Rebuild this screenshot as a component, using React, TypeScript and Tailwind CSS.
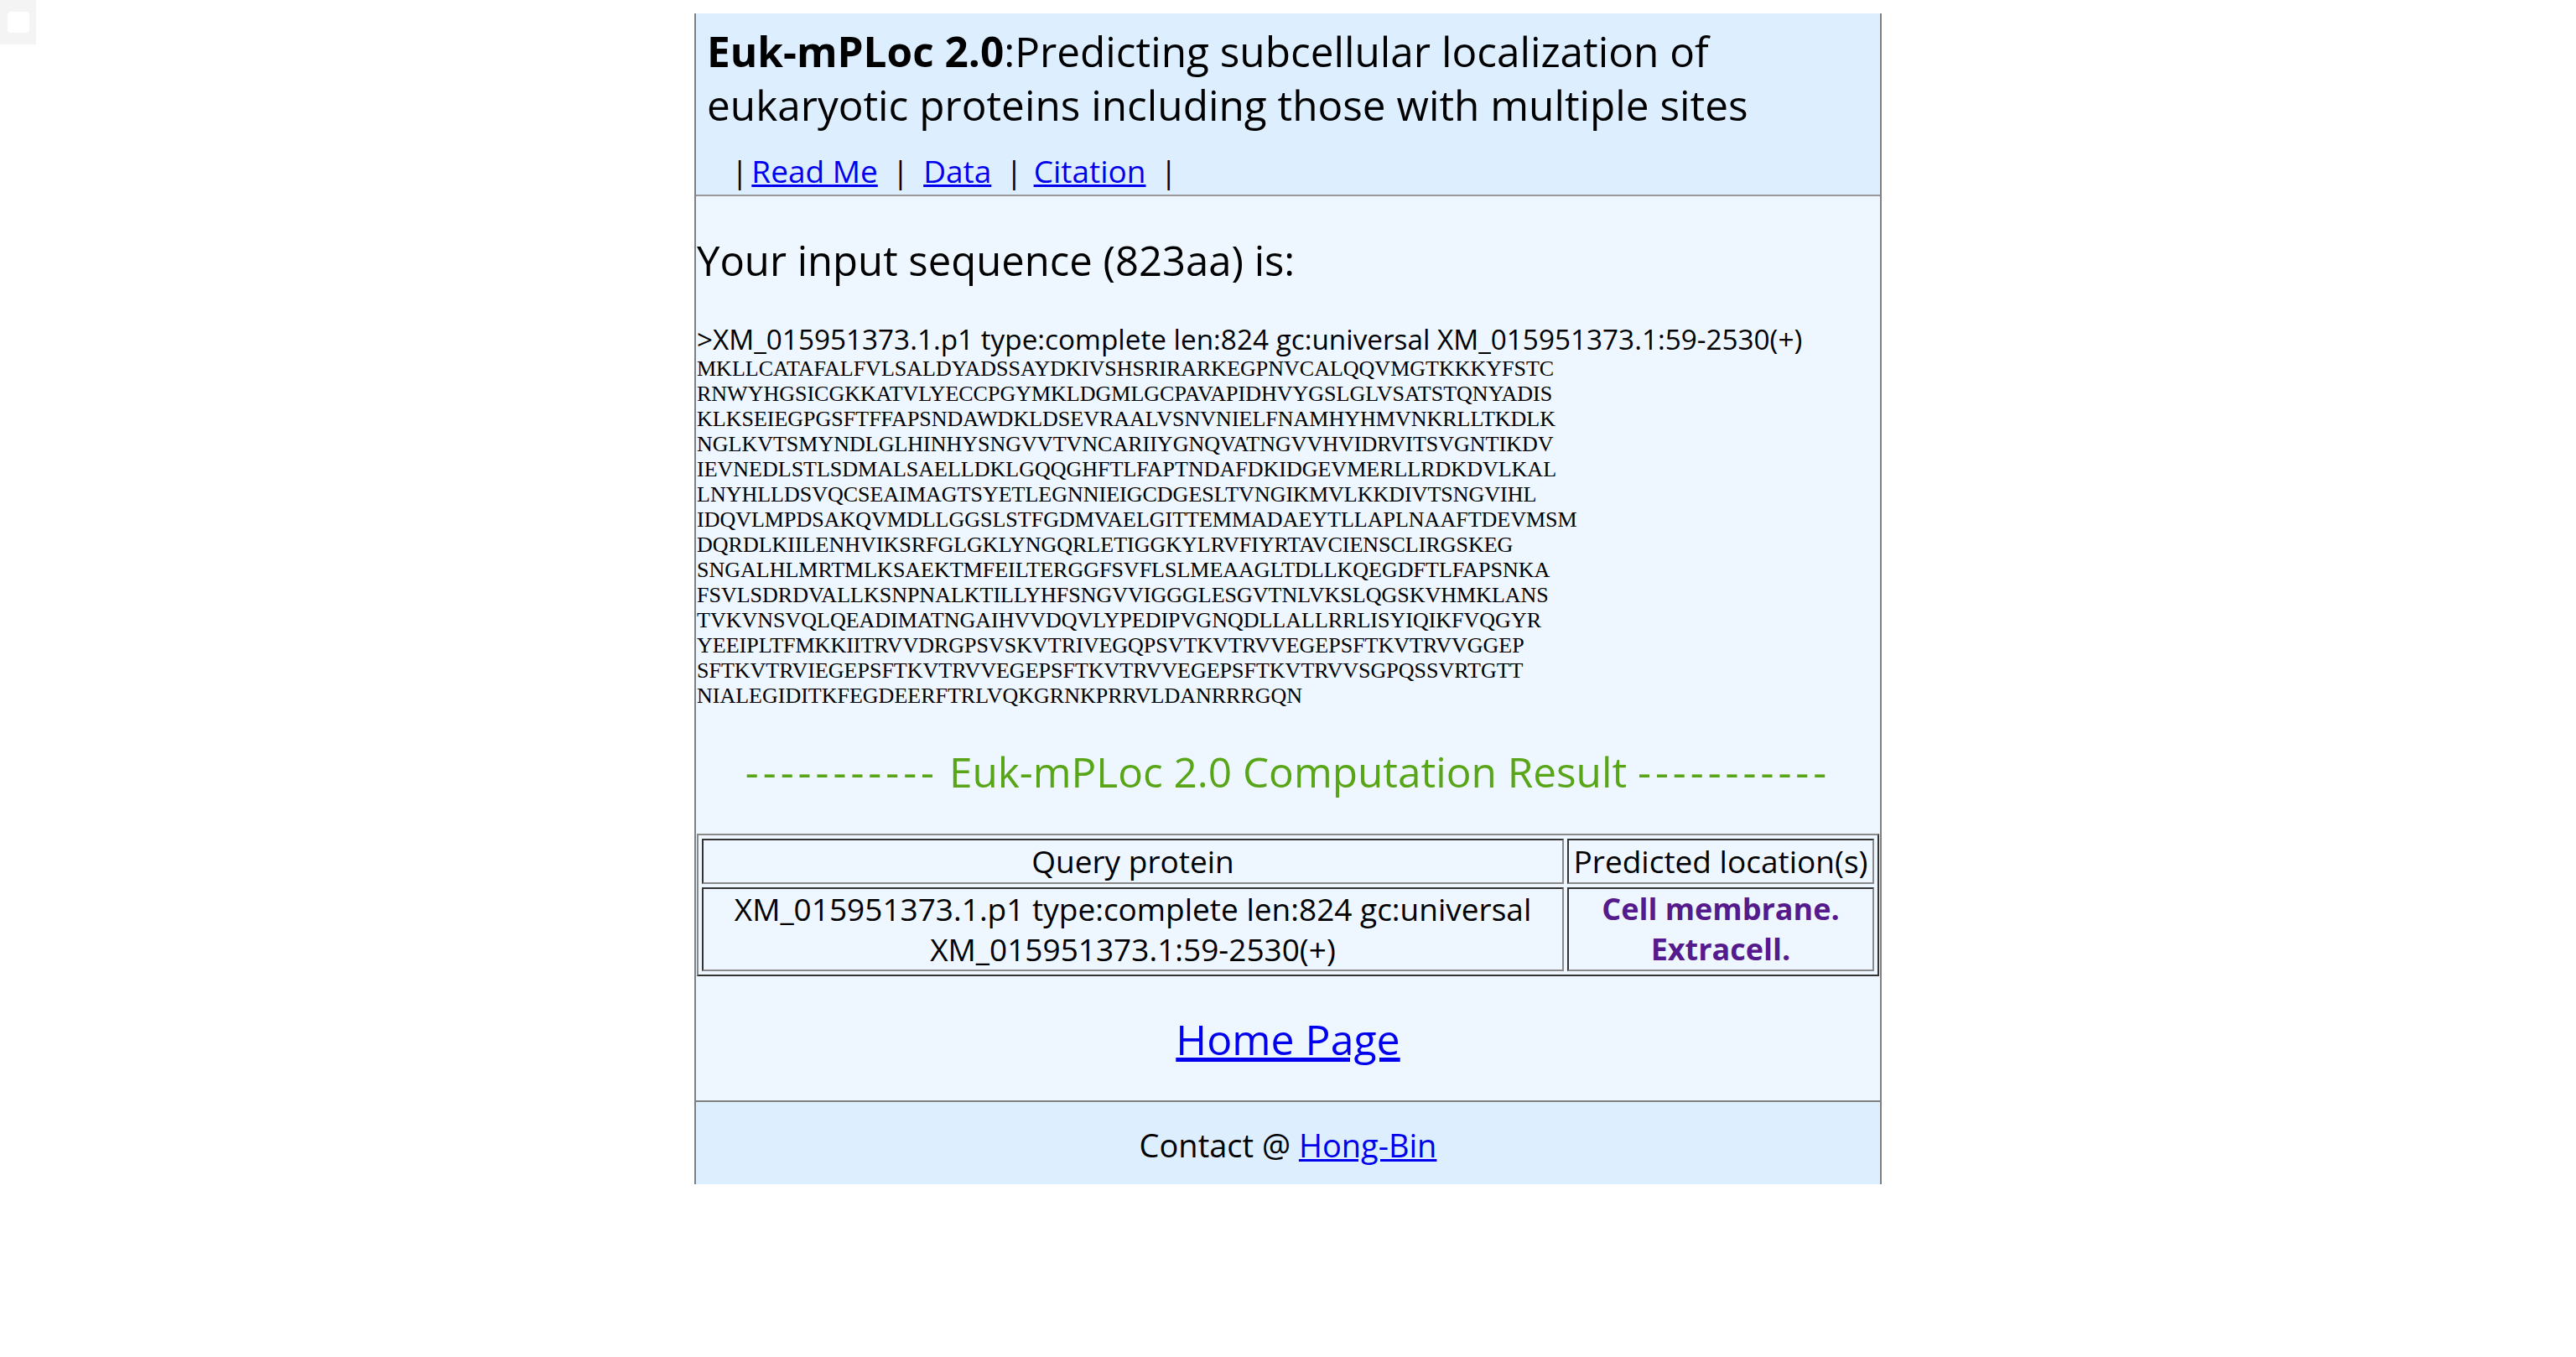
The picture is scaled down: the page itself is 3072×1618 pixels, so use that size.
import React from "react";

const SEQ = [
  "MKLLCATAFALFVLSALDYADSSAYDKIVSHSRIRARKEGPNVCALQQVMGTKKKYFSTC",
  "RNWYHGSICGKKATVLYECCPGYMKLDGMLGCPAVAPIDHVYGSLGLVSATSTQNYADIS",
  "KLKSEIEGPGSFTFFAPSNDAWDKLDSEVRAALVSNVNIELFNAMHYHMVNKRLLTKDLK",
  "NGLKVTSMYNDLGLHINHYSNGVVTVNCARIIYGNQVATNGVVHVIDRVITSVGNTIKDV",
  "IEVNEDLSTLSDMALSAELLDKLGQQGHFTLFAPTNDAFDKIDGEVMERLLRDKDVLKAL",
  "LNYHLLDSVQCSEAIMAGTSYETLEGNNIEIGCDGESLTVNGIKMVLKKDIVTSNGVIHL",
  "IDQVLMPDSAKQVMDLLGGSLSTFGDMVAELGITTEMMADAEYTLLAPLNAAFTDEVMSM",
  "DQRDLKIILENHVIKSRFGLGKLYNGQRLETIGGKYLRVFIYRTAVCIENSCLIRGSKEG",
  "SNGALHLMRTMLKSAEKTMFEILTERGGFSVFLSLMEAAGLTDLLKQEGDFTLFAPSNKA",
  "FSVLSDRDVALLKSNPNALKTILLYHFSNGVVIGGGLESGVTNLVKSLQGSKVHMKLANS",
  "TVKVNSVQLQEADIMATNGAIHVVDQVLYPEDIPVGNQDLLALLRRLISYIQIKFVQGYR",
  "YEEIPLTFMKKIITRVVDRGPSVSKVTRIVEGQPSVTKVTRVVEGEPSFTKVTRVVGGEP",
  "SFTKVTRVIEGEPSFTKVTRVVEGEPSFTKVTRVVEGEPSFTKVTRVVSGPQSSVRTGTT",
  "NIALEGIDITKFEGDEERFTRLVQKGRNKPRRVLDANRRRGQN",
];

const SANS = "font-['Segoe_UI','Open_Sans',sans-serif]";

export default function App() {
  return (
    <div className={`relative min-h-[1618px] bg-white text-black ${SANS}`}>
      <div className="absolute left-0 top-0 flex h-[53px] w-[43px] items-center justify-center bg-[#f4f4f4]">
        <div className="h-[25px] w-[26px] rounded-[4px] bg-white" />
      </div>
      <div className="pt-4">
        <div className="mx-auto w-[1416px] border-x-2 border-[#808080]">
          {/* Header */}
          <div className="border-b-2 border-[#999999] bg-[#ddeeff] pl-[13px] pt-[13px] pb-[7px]">
            <div className="text-[49.5px] leading-[64px]">
              <span className="font-bold">Euk-mPLoc 2.0</span>:Predicting subcellular localization of
              <br />
              eukaryotic proteins including those with multiple sites
            </div>
            <div className="mt-[26px] flex pl-[29px] text-[37px] leading-[42px]">
              <span>|</span>
              <a href="#" className="ml-[4px] text-[#0000ee] underline">Read Me</a>
              <span className="ml-[17px]">|</span>
              <a href="#" className="ml-[17px] text-[#0000ee] underline">Data</a>
              <span className="ml-[17px]">|</span>
              <a href="#" className="ml-[13px] text-[#0000ee] underline">Citation</a>
              <span className="ml-[17px]">|</span>
            </div>
          </div>

          {/* Body */}
          <div className="bg-[#eef7ff]">
            <div className="pl-[1px] pt-[44px] text-[49px] leading-[64px]">
              Your input sequence (823aa) is:
            </div>
            <div className="mt-[41px] pl-[1px] text-[33.3px] leading-[42px]">
              &gt;XM_015951373.1.p1 type:complete len:824 gc:universal XM_015951373.1:59-2530(+)
            </div>
            <div className="pl-[1px] font-['Liberation_Serif','Times_New_Roman',serif] text-[26px] leading-[30px]">
              {SEQ.map((l) => (
                <div key={l}>{l}</div>
              ))}
            </div>
            <div className="mt-[43px] text-center text-[49.5px] leading-[64px] text-[#58a517]">
              <span className="tracking-[5px]">-----------</span> Euk-mPLoc 2.0 Computation Result <span className="tracking-[5px]">-----------</span>
            </div>
            <div className="mt-[42px] px-[1px]">
              <table className="w-full border-separate border-spacing-[4px] border-2 border-t-[#8a8a8a] border-l-[#8a8a8a] border-r-[#333333] border-b-[#333333] text-center text-[37px] leading-[48px]">
                <tbody>
                  <tr>
                    <td className="w-[1028px] border-2 border-t-[#333333] border-l-[#333333] border-r-[#8a8a8a] border-b-[#8a8a8a] py-[1px]">
                      Query protein
                    </td>
                    <td className="border-2 border-t-[#333333] border-l-[#333333] border-r-[#8a8a8a] border-b-[#8a8a8a] py-[1px] whitespace-nowrap">
                      Predicted location(s)
                    </td>
                  </tr>
                  <tr>
                    <td className="border-2 border-t-[#333333] border-l-[#333333] border-r-[#8a8a8a] border-b-[#8a8a8a]">
                      XM_015951373.1.p1 type:complete len:824 gc:universal
                      <br />
                      XM_015951373.1:59-2530(+)
                    </td>
                    <td className="border-2 border-t-[#333333] border-l-[#333333] border-r-[#8a8a8a] border-b-[#8a8a8a] font-bold text-[#551a8b] text-[36px]">
                      Cell membrane.
                      <br />
                      Extracell.
                    </td>
                  </tr>
                </tbody>
              </table>
            </div>
            <div className="flex h-[148px] items-center justify-center pt-[2px] text-[50px] leading-[64px]">
              <a href="#" className="text-[#0000ee] underline">Home Page</a>
            </div>
          </div>

          {/* Footer */}
          <div className="flex h-[100px] items-center justify-center border-t-2 border-[#808080] bg-[#ddeeff] pt-[4px] text-[38px] leading-[48px]">
            <span>
              Contact @ <a href="#" className="text-[#0000ee] underline">Hong-Bin</a>
            </span>
          </div>
        </div>
      </div>
    </div>
  );
}
